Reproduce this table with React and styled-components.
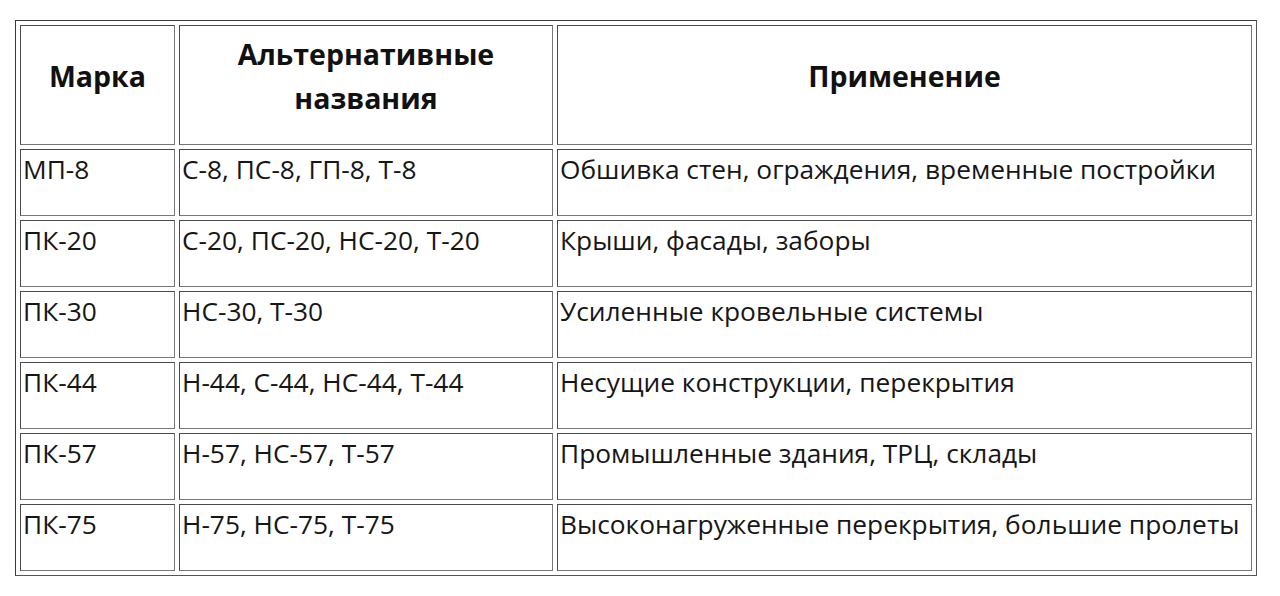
import React from "react";
import styled, { createGlobalStyle } from "styled-components";

const GlobalStyle = createGlobalStyle`
    html, body {
        margin: 0;
        padding: 0;
        background: #ffffff;
    }
`;

const Page = styled.div`
    padding: 20px 0 0 15px;
    font-family: "Open Sans", "Noto Sans", sans-serif;
    color: #161616;
`;

const Table = styled.table`
    border-collapse: separate;
    border-spacing: 4px;
    border: 1px solid #3a3a3a;
    border-right-color: #555;
    border-bottom-color: #555;
`;

const HeadCell = styled.th`
    box-sizing: border-box;
    width: ${(p) => p.width}px;
    height: 120px;
    padding: 0 4px 18px 4px;
    border: 1px solid #4a4a4a;
    border-right-color: #777;
    border-bottom-color: #777;
    font-family: "Open Sans", "Noto Sans", sans-serif;
    font-weight: 700;
    font-size: 28.5px;
    line-height: 44px;
    text-align: center;
    vertical-align: middle;
    color: #111;
`;

const Cell = styled.td`
    box-sizing: border-box;
    height: 67px;
    padding: 1px 2px 0 2px;
    border: 1px solid #4a4a4a;
    border-right-color: #777;
    border-bottom-color: #777;
    font-size: 26.3px;
    line-height: 36px;
    vertical-align: top;
    white-space: nowrap;
`;

const rows = [
    ["МП-8", "С-8, ПС-8, ГП-8, Т-8", "Обшивка стен, ограждения, временные постройки"],
    ["ПК-20", "С-20, ПС-20, НС-20, Т-20", "Крыши, фасады, заборы"],
    ["ПК-30", "НС-30, Т-30", "Усиленные кровельные системы"],
    ["ПК-44", "Н-44, С-44, НС-44, Т-44", "Несущие конструкции, перекрытия"],
    ["ПК-57", "Н-57, НС-57, Т-57", "Промышленные здания, ТРЦ, склады"],
    ["ПК-75", "Н-75, НС-75, Т-75", "Высоконагруженные перекрытия, большие пролеты"],
];

function App() {
    return (
        <Page>
            <GlobalStyle />
            <Table>
                <thead>
                    <tr>
                        <HeadCell width={155}>Марка</HeadCell>
                        <HeadCell width={374}>Альтернативные названия</HeadCell>
                        <HeadCell width={695}>Применение</HeadCell>
                    </tr>
                </thead>
                <tbody>
                    {rows.map((row) => (
                        <tr key={row[0]}>
                            {row.map((text, i) => (
                                <Cell key={i}>{text}</Cell>
                            ))}
                        </tr>
                    ))}
                </tbody>
            </Table>
        </Page>
    );
}

export default App;
